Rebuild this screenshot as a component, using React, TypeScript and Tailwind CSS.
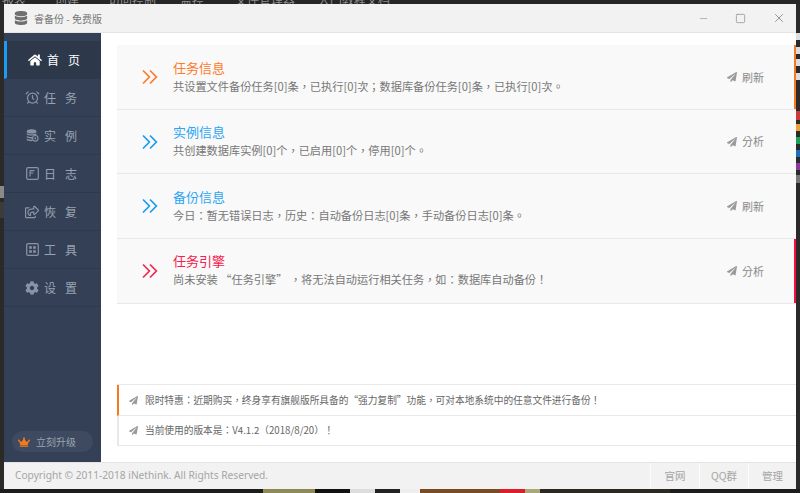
import React from "react";
import { Minus, Square, X } from "lucide-react";
import { FaHome, FaCog, FaPaperPlane, FaDatabase, FaCrown, FaRegShareSquare } from "react-icons/fa";
import { LuAlarmClock } from "react-icons/lu";

const FONT = "[font-family:'Noto_Sans_CJK_TC','Liberation_Sans',sans-serif]";

function Chevrons({ color }: { color: string }) {
  return (
    <svg viewBox="0 0 16 16" className="w-[16px] h-[16px]" fill="none" stroke={color} strokeWidth="1.7">
      <path d="M1 1.5 L7.4 8 L1 14.5" />
      <path d="M8 1.5 L14.4 8 L8 14.5" />
    </svg>
  );
}

function DbIcon({ className = "" }: { className?: string }) {
  return (
    <svg viewBox="0 0 14 14" className={className} fill="currentColor">
      <ellipse cx="6" cy="2.6" rx="5.2" ry="2.2" />
      <path d="M0.8 4.2 C2 6 10 6 11.2 4.2 V6 C10 7.4 2 7.4 0.8 6 Z" />
      <path d="M0.8 7.2 C2 8.8 6 8.8 7 8.6 L6.6 10.2 C4 10.4 1.6 10 0.8 9 Z" />
      <path d="M0.8 10.2 C2 11.4 5 11.6 6.6 11.4 L7.4 13 C4 13.4 1.4 12.6 0.8 11.8 Z" />
      <circle cx="10" cy="10" r="3" fill="none" stroke="currentColor" strokeWidth="1.2" />
      <circle cx="10" cy="10" r="1" />
    </svg>
  );
}

function LogIcon({ className = "" }: { className?: string }) {
  return (
    <svg viewBox="0 0 13 13" className={className} fill="none" stroke="currentColor">
      <rect x="0.7" y="0.7" width="11.6" height="11.6" rx="1.4" strokeWidth="1.2" />
      <path d="M4 3.6 H8.4 M4 6 H7.4 M4 3.6 V9.6" strokeWidth="1.1" />
    </svg>
  );
}

function ToolIcon({ className = "" }: { className?: string }) {
  return (
    <svg viewBox="0 0 13 13" className={className} fill="currentColor">
      <rect x="0.7" y="0.7" width="11.6" height="11.6" rx="1.4" fill="none" stroke="currentColor" strokeWidth="1.2" />
      <rect x="3.2" y="3.2" width="2.6" height="2.6" />
      <rect x="7.2" y="3.2" width="2.6" height="2.6" />
      <rect x="3.2" y="7.2" width="2.6" height="2.6" />
      <rect x="7.2" y="7.2" width="2.6" height="2.6" />
    </svg>
  );
}

const nav = [
  { a: "首", b: "页", icon: <FaHome className="w-[14px] h-[14px]" />, active: true },
  { a: "任", b: "务", icon: <LuAlarmClock className="w-[15px] h-[15px]" /> },
  { a: "实", b: "例", icon: <DbIcon className="w-[13px] h-[13px]" /> },
  { a: "日", b: "志", icon: <LogIcon className="w-[13px] h-[13px]" /> },
  { a: "恢", b: "复", icon: <FaRegShareSquare className="w-[14px] h-[14px]" /> },
  { a: "工", b: "具", icon: <ToolIcon className="w-[13px] h-[13px]" /> },
  { a: "设", b: "置", icon: <FaCog className="w-[14px] h-[14px]" /> },
];

const rows = [
  { title: "任务信息", tc: "text-[#ff7a2a]", cc: "#ff7a2a", bar: "bg-[#f47a20]", h: "h-[65px]", shift: "", desc: "共设置文件备份任务[0]条，已执行[0]次；数据库备份任务[0]条，已执行[0]次。", act: "刷新" },
  { title: "实例信息", tc: "text-[#2aa6f5]", cc: "#1a9cf2", bar: "", h: "h-[64px]", shift: "mb-[1px]", desc: "共创建数据库实例[0]个，已启用[0]个，停用[0]个。", act: "分析" },
  { title: "备份信息", tc: "text-[#2aa6f5]", cc: "#1a9cf2", bar: "", h: "h-[65px]", shift: "", desc: "今日：暂无错误日志，历史：自动备份日志[0]条，手动备份日志[0]条。", act: "刷新" },
  { title: "任务引擎", tc: "text-[#f5204f]", cc: "#ef2a56", bar: "bg-[#f5103f]", h: "h-[65px]", shift: "mb-[2px]", desc: "尚未安装 “任务引擎” ，将无法自动运行相关任务，如：数据库自动备份！", act: "分析" },
];

export default function App() {
  return (
    <div className={`w-[800px] h-[493px] bg-[#262626] flex flex-col overflow-hidden ${FONT}`}>
      {/* desktop behind the window, top */}
      <div className="h-[4px] shrink-0 overflow-hidden flex text-[12px] leading-[8px] text-[#8f8f8f]">
        <span className="-mt-[4px] ml-[2px] w-[53px]">报表</span>
        <span className="-mt-[4px] w-[53px]">创建</span>
        <span className="-mt-[4px] w-[72px]">访问控制</span>
        <span className="-mt-[4px] w-[55px]">监控</span>
        <span className="-mt-[4px] w-[83px]">文件管理器</span>
        <span className="-mt-[4px]">入门教程文档</span>
      </div>
      <div className="flex-1 flex min-h-0">
        <div className="w-[4px] shrink-0 bg-[#2b2a28] flex flex-col">
          <div className="h-[182px] shrink-0" />
          <div className="h-[12px] bg-[#8a8a86]" />
          <div className="h-[16px] mt-[4px] bg-[#3c3c3a]" />
        </div>
        <div className="flex-1 flex flex-col min-w-0 bg-white">
          {/* title bar */}
          <div className="h-[29px] shrink-0 bg-[#f2f2f2] border-b border-[#e4e4e4] flex items-center pl-[10px]">
            <FaDatabase className="w-[14px] h-[14px] text-[#6f6f6f]" />
            <span className="ml-[6px] text-[10px] text-[#777]">睿备份 - 免费版</span>
            <div className="ml-auto flex items-center">
              <Minus className="w-[11px] h-[11px] text-[#999]" strokeWidth={1.5} />
              <Square className="w-[11px] h-[11px] text-[#888] ml-[26px]" strokeWidth={1.5} />
              <X className="w-[14px] h-[14px] text-[#888] ml-[26px] mr-[10px]" strokeWidth={1.5} />
            </div>
          </div>
          <div className="flex-1 flex min-h-0">
            {/* sidebar */}
            <aside className="w-[97px] shrink-0 bg-[#344055] flex flex-col pt-[8px]">
              {nav.map((n) => (
                <div
                  key={n.a}
                  className={`h-[38px] flex items-center border-b border-[#2e394c] text-[12px] pl-[20px] ${
                    n.active ? "bg-[#2d384b] text-white border-l-[3px] border-l-[#1a9cf2] pl-[17px]" : "text-[#9aa3b2]"
                  }`}
                >
                  <span className={`w-[16px] flex justify-center ${n.active ? "text-white" : "text-[#8b94a4]"}`}>{n.icon}</span>
                  <span className="ml-[4px]">{n.a}</span>
                  <span className="ml-[9px]">{n.b}</span>
                </div>
              ))}
              <div className="mt-auto mb-[10px] ml-[8px] w-[81px] h-[21px] rounded-full bg-[#3e4a60] flex items-center pl-[6px] text-[#9aa3b2] text-[10px]">
                <FaCrown className="w-[12px] h-[12px] text-[#f57a1c]" />
                <span className="ml-[6px]">立刻升级</span>
              </div>
            </aside>
            {/* main */}
            <main className="flex-1 min-w-0 flex flex-col pl-[16px] pt-[12px] pb-[16px]">
              <div className="flex flex-col">
                {rows.map((r) => (
                  <div key={r.title} className={`relative ${r.h} bg-[#f9f9f9] border-b border-[#e8e8e8] flex items-center pl-[25px] pr-[32px]`}>
                    <Chevrons color={r.cc} />
                    <div className={`ml-[15px] flex flex-col ${r.shift}`}>
                      <span className={`text-[13px] leading-[19px] ${r.tc}`}>{r.title}</span>
                      <span className="text-[11.2px] leading-[19px] text-[#777]">{r.desc}</span>
                    </div>
                    <div className="ml-auto flex items-center text-[11px] text-[#8a8a8a]">
                      <FaPaperPlane className="w-[10px] h-[10px] text-[#9a9a9a]" />
                      <span className="ml-[5px]">{r.act}</span>
                    </div>
                    {r.bar && <div className={`absolute right-0 top-0 bottom-0 w-[2px] ${r.bar}`} />}
                  </div>
                ))}
              </div>
              <div className="mt-auto border-y border-[#e8e8e8] border-l-2 border-l-[#e8e8e8]">
                <div className="h-[31px] flex items-center pl-[10px] pt-[1px] border-b border-[#e8e8e8] border-l-2 border-l-[#f47a20] -ml-[2px] text-[9.7px] text-[#666]">
                  <FaPaperPlane className="w-[9px] h-[9px] text-[#9a9a9a]" />
                  <span className="ml-[7px]">限时特惠：近期购买，终身享有旗舰版所具备的“强力复制”功能，可对本地系统中的任意文件进行备份！</span>
                </div>
                <div className="h-[29px] flex items-center pl-[10px] text-[9.7px] text-[#666]">
                  <FaPaperPlane className="w-[9px] h-[9px] text-[#9a9a9a]" />
                  <span className="ml-[7px]">当前使用的版本是：V4.1.2（2018/8/20）！</span>
                </div>
              </div>
            </main>
          </div>
          {/* footer */}
          <div className="h-[27px] shrink-0 bg-[#f2f2f2] border-t border-[#e4e4e4] flex items-center pl-[11px] text-[10.5px] text-[#a5a5a5]">
            <span className="[font-family:'Noto_Sans',sans-serif] text-[10.2px]">Copyright © 2011-2018 iNethink. All Rights Reserved.</span>
            <div className="ml-auto flex h-full">
              <div className="w-[49px] border-l border-[#fbfbfb] flex items-center justify-center">官网</div>
              <div className="w-[49px] border-l border-[#fbfbfb] flex items-center justify-center">QQ群</div>
              <div className="w-[48px] border-l border-[#fbfbfb] flex items-center justify-center">管理</div>
            </div>
          </div>
        </div>
        {/* desktop behind the window, right */}
        <div className="w-[4px] shrink-0 flex flex-col bg-[#2a2a2a]">
          <div className="h-[29px] shrink-0" />
          <div className="h-[7px] bg-[#ddd]" />
          <div className="h-[7px] mt-[7px] bg-[#ddd]" />
          <div className="h-[7px] mt-[5px] bg-[#ddd]" />
          <div className="h-[7px] mt-[7px] bg-[#ddd]" />
          <div className="h-[9px] mt-[31px] bg-[#c93a3a]" />
          <div className="h-[7px] mt-[4px] bg-[#e8a23a]" />
          <div className="h-[7px] mt-[6px] bg-[#1e9e5a]" />
          <div className="h-[7px] mt-[6px] bg-[#1e6fb8]" />
          <div className="h-[7px] mt-[6px] bg-[#8a3a9e]" />
          <div className="h-[8px] mt-[5px] bg-[#777]" />
        </div>
      </div>
      {/* desktop behind the window, bottom */}
      <div className="h-[4px] shrink-0 flex bg-[#1c1c1c]">
        <div className="w-[263px]" />
        <div className="w-[52px] bg-[#8f8a55]" />
        <div className="w-[35px] bg-[#111]" />
        <div className="w-[25px] bg-[#ddd]" />
        <div className="w-[25px] bg-[#222]" />
        <div className="w-[20px] bg-[#eee]" />
        <div className="w-[80px] bg-[#7a4a20]" />
        <div className="w-[25px] bg-[#d8202a]" />
        <div className="w-[15px] bg-[#a8a878]" />
        <div className="w-[130px] bg-[#2a2a22]" />
      </div>
    </div>
  );
}
